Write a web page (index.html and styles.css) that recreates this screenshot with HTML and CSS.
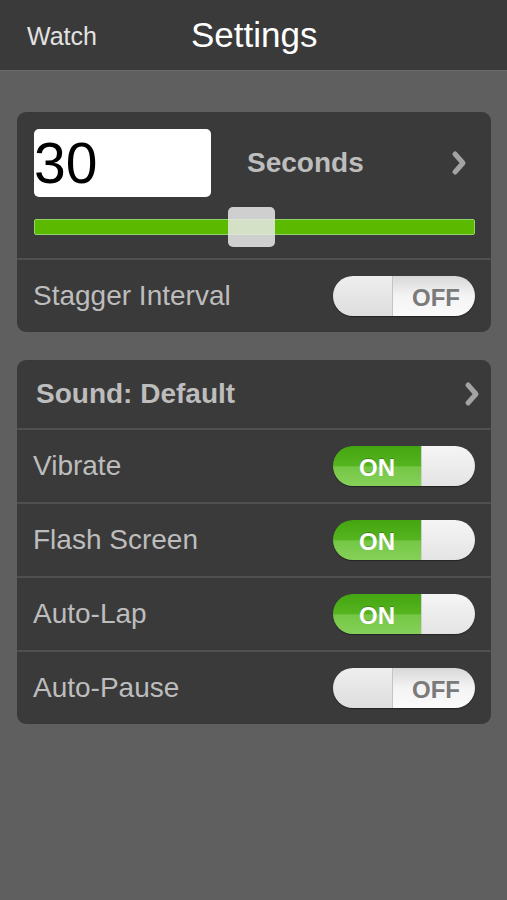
FILE: index.html
```html
<!DOCTYPE html>
<html lang="en">
  <head>
    <meta charset="UTF-8" />
    <meta name="viewport" content="width=device-width, initial-scale=1.0" />
    <title>Settings</title>
    <link rel="stylesheet" href="styles.css">
  </head>
  <body>
    <header class="topbar">
      <span class="back">Watch</span>
      <h1 class="title">Settings</h1>
    </header>
    <main class="content">
      <section class="card">
        <div class="interval">
          <div class="interval-head">
            <div class="number-box">30</div>
            <span class="unit">Seconds</span>
            <svg class="chevron" width="16" height="26" viewBox="0 0 16 26">
              <polyline points="4,4 12,13 4,22" />
            </svg>
          </div>
          <div class="slider">
            <div class="track"></div>
            <div class="thumb"></div>
          </div>
        </div>
        <div class="row">
          <span class="label">Stagger Interval</span>
          <div class="switch off"><span class="knob"></span><span class="state">OFF</span></div>
        </div>
      </section>

      <section class="card">
        <div class="row row-link">
          <span class="label strong">Sound: Default</span>
          <svg class="chevron" width="16" height="26" viewBox="0 0 16 26">
            <polyline points="4,4 12,13 4,22" />
          </svg>
        </div>
        <div class="row">
          <span class="label">Vibrate</span>
          <div class="switch on"><span class="state">ON</span><span class="knob"></span></div>
        </div>
        <div class="row">
          <span class="label">Flash Screen</span>
          <div class="switch on"><span class="state">ON</span><span class="knob"></span></div>
        </div>
        <div class="row">
          <span class="label">Auto-Lap</span>
          <div class="switch on"><span class="state">ON</span><span class="knob"></span></div>
        </div>
        <div class="row">
          <span class="label">Auto-Pause</span>
          <div class="switch off"><span class="knob"></span><span class="state">OFF</span></div>
        </div>
      </section>
    </main>
  </body>
</html>
```

FILE: styles.css
```css
* {
  margin: 0;
  padding: 0;
  box-sizing: border-box;
}

body {
  font-family: "Liberation Sans", Arial, sans-serif;
  background-color: #5f5f5f;
  color: #bdbdbd;
}

/* TOP BAR */
.topbar {
  height: 71px;
  background-color: #3a3a3a;
  border-bottom: 1px solid #6b6b6b;
  display: flex;
  align-items: center;
  padding-left: 27px;
}

.back {
  font-size: 25px;
  color: #e2e2e2;
  margin-top: 3px;
}

.title {
  font-size: 35px;
  font-weight: normal;
  color: #fff;
  margin-left: 94px;
}

/* CARDS */
.content {
  padding: 41px 16px 0 17px;
  display: flex;
  flex-direction: column;
  gap: 28px;
}

.card {
  background-color: #3a3a3a;
  border-radius: 9px;
  overflow: hidden;
}

.interval {
  padding: 17px 16px 11px 17px;
}

.interval-head {
  display: flex;
  align-items: center;
}

.number-box {
  width: 177px;
  height: 68px;
  background: #fff;
  border-radius: 5px;
  color: #000;
  font-size: 57px;
  line-height: 68px;
}

.unit {
  flex: 1;
  margin-left: 36px;
  font-size: 28px;
  font-weight: bold;
  color: #bdbdbd;
}

.chevron {
  display: block;
}

.chevron polyline {
  fill: none;
  stroke: #a3a3a3;
  stroke-width: 5;
  stroke-linecap: round;
  stroke-linejoin: round;
}

.interval-head .chevron {
  margin-right: 8px;
}

.slider {
  position: relative;
  height: 40px;
  margin-top: 10px;
  display: flex;
  align-items: center;
}

.track {
  width: 100%;
  height: 16px;
  background: #5bb900;
  border: 1px solid #8fd36a;
  border-radius: 2px;
}

.thumb {
  position: absolute;
  top: 0;
  left: 194px;
  width: 47px;
  height: 40px;
  border-radius: 5px;
  background: rgba(232, 232, 232, 0.86);
}

/* ROWS */
.row {
  height: 74px;
  border-top: 2px solid #4f4f4f;
  display: flex;
  align-items: center;
  justify-content: space-between;
  padding: 0 16px;
}

.row-link {
  height: 68px;
  border-top: none;
  padding: 0 11px 0 19px;
}

.label {
  font-size: 28px;
  color: #bdbdbd;
}

.label.strong {
  font-weight: bold;
}

/* SWITCHES */
.switch {
  width: 142px;
  height: 40px;
  border-radius: 20px;
  overflow: hidden;
  display: flex;
  box-shadow: 0 1px 1px rgba(0, 0, 0, 0.4);
}

.switch .state {
  flex: 1;
  display: flex;
  align-items: center;
  justify-content: center;
  padding-top: 3px;
  font-size: 24px;
  font-weight: bold;
}

.switch .knob {
  background: linear-gradient(#f5f5f5, #e4e4e4);
}

.switch.on .state {
  color: #fff;
  background: linear-gradient(#44a512, #56b51f 50%, #74c744 52%, #86d05a);
  text-shadow: 0 -1px 0 rgba(0, 0, 0, 0.25);
}

.switch.on .knob {
  width: 54px;
  border-left: 1px solid #cfcfcf;
}

.switch.off .knob {
  width: 60px;
  border-right: 1px solid #c4c4c4;
  background: linear-gradient(#eeeeee, #dedede);
}

.switch.off .state {
  color: #7a7a7a;
  background: linear-gradient(#d8d8d8, #f4f4f4 50%, #fafafa);
  padding-left: 4px;
}
```
